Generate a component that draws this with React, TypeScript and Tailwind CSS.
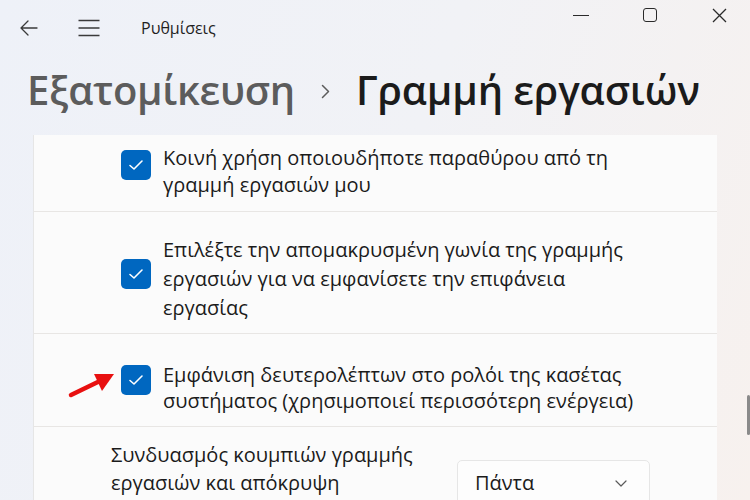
import React from "react";

const font = { fontFamily: '"Open Sans", "Noto Sans", sans-serif' };

function Check() {
  return (
    <div className="w-[30px] h-[30px] shrink-0 rounded-[5px] bg-[#0067c0] flex items-center justify-center">
      <svg width="16" height="12" viewBox="0 0 16 12" fill="none">
        <path d="M2 6.5 L6 10 L14 2" stroke="white" strokeWidth="1.6" strokeLinecap="round" strokeLinejoin="round" />
      </svg>
    </div>
  );
}

export default function App() {
  return (
    <div
      className="w-[750px] h-[500px] overflow-hidden relative bg-[linear-gradient(110deg,#eef1f8_0%,#f1f2f6_50%,#f7f1ee_100%)] text-[#1b1b1b]"
      style={font}
    >
      {/* title bar */}
      <div className="flex items-center h-[56px]">
        <div className="w-[57px] flex justify-center pl-[1px]">
          <svg width="18" height="16" viewBox="0 0 18 16" fill="none">
            <path d="M17 8 H1.5 M8 1 L1 8 L8 15" stroke="#3a3a3a" strokeWidth="1.3" strokeLinecap="round" strokeLinejoin="round" />
          </svg>
        </div>
        <div className="w-[64px] flex justify-center">
          <svg width="22" height="18" viewBox="0 0 22 18" fill="none">
            <path d="M0.5 1.5 H21.5 M0.5 9 H21.5 M0.5 16.5 H21.5" stroke="#3a3a3a" strokeWidth="1.3" />
          </svg>
        </div>
        <div className="ml-[20px] text-[16px] text-[#1f1f1f]">Ρυθμίσεις</div>
        <div className="ml-auto flex items-start self-start pt-[8px] gap-[53px] pr-[23px]">
          <div className="w-[16px] h-[15px] flex items-start pt-[7px]">
            <div className="w-[16px] h-[1.3px] bg-[#2a2a2a]" />
          </div>
          <div className="w-[16px] flex justify-center">
            <div className="w-[14px] h-[14px] border-[1.3px] border-[#2a2a2a] rounded-[3px]" />
          </div>
          <div className="w-[16px] flex justify-center">
            <svg width="15" height="15" viewBox="0 0 15 15" fill="none">
              <path d="M1 1 L14 14 M14 1 L1 14" stroke="#2a2a2a" strokeWidth="1.3" />
            </svg>
          </div>
        </div>
      </div>

      {/* breadcrumb */}
      <div className="flex items-center h-[72px] pl-[27px] -mt-[2px]">
        <span className="text-[40px] font-semibold text-[#5c5c5c] tracking-[-0.3px]">Εξατομίκευση</span>
        <svg className="mx-[26px] mt-[2px]" width="9" height="15" viewBox="0 0 9 15" fill="none">
          <path d="M1.5 1.5 L7.5 7.5 L1.5 13.5" stroke="#5c5c5c" strokeWidth="1.5" strokeLinecap="round" strokeLinejoin="round" />
        </svg>
        <span className="text-[40px] font-semibold text-[#1b1b1b] tracking-[-0.1px]">Γραμμή εργασιών</span>
      </div>

      {/* card */}
      <div className="ml-[33px] mt-[9px] w-[684px] bg-[#fbfbfb] border-l border-[#e6e6e6] text-[20px] leading-[27px]">
        <div className="h-[77px] border-b border-[#e8e6e4] flex items-start pl-[87px] pt-[9px]">
          <div className="mt-[6px]"><Check /></div>
          <div className="ml-[12px]">
            Κοινή χρήση οποιουδήποτε παραθύρου από τη
            <br />
            γραμμή εργασιών μου
          </div>
        </div>
        <div className="h-[122px] border-b border-[#e8e6e4] flex items-start pl-[87px] pt-[23px]">
          <div className="mt-[24px]"><Check /></div>
          <div className="ml-[12px] leading-[29px]">
            Επιλέξτε την απομακρυσμένη γωνία της γραμμής
            <br />
            εργασιών για να εμφανίσετε την επιφάνεια
            <br />
            εργασίας
          </div>
        </div>
        <div className="h-[93px] border-b border-[#e8e6e4] flex items-start pl-[87px] pt-[28px]">
          <div className="mt-[3px]"><Check /></div>
          <div className="ml-[12px] leading-[26px]">
            Εμφάνιση δευτερολέπτων στο ρολόι της κασέτας
            <br />
            συστήματος (χρησιμοποιεί περισσότερη ενέργεια)
          </div>
        </div>
        <div className="h-[80px] flex items-start pl-[77px] pt-[14px]">
          <div className="w-[340px] leading-[28px]">
            Συνδυασμός κουμπιών γραμμής
            <br />
            εργασιών και απόκρυψη
          </div>
          <div className="ml-[6px] mt-[19px] w-[193px] h-[50px] rounded-[5px] border border-[#e6e6e6] bg-[#fdfdfd] flex items-start pt-[8px] pl-[17px] pr-[22px]">
            <span>Πάντα</span>
            <svg className="ml-auto mt-[11px]" width="12" height="7" viewBox="0 0 12 7" fill="none">
              <path d="M1 1 L6 6 L11 1" stroke="#5a5a5a" strokeWidth="1.2" strokeLinecap="round" strokeLinejoin="round" />
            </svg>
          </div>
        </div>
      </div>

      {/* scrollbar */}
      <div className="absolute left-[747px] top-[395px] w-[3px] h-[40px] rounded-full bg-[#8a8a8a]" />

      {/* red arrow annotation */}
      <svg className="absolute left-[60px] top-[360px]" width="60" height="45" viewBox="0 0 60 45" fill="none">
        <path d="M11 35 L42 20" stroke="#e81010" strokeWidth="4.5" strokeLinecap="round" />
        <path d="M54 14 L34 14 L42 31 Z" fill="#e81010" />
      </svg>
    </div>
  );
}
